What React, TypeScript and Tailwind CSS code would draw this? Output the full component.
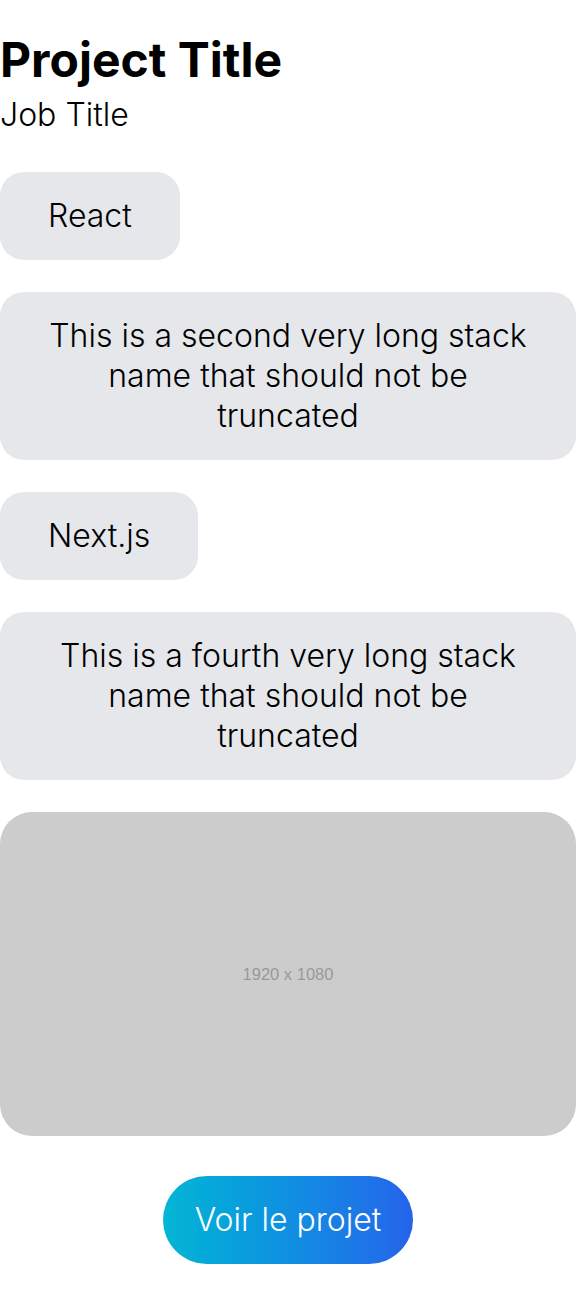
const stacks = [
  "React",
  "This is a second very long stack name that should not be truncated",
  "Next.js",
  "This is a fourth very long stack name that should not be truncated",
];

const App = () => {
  return (
    <main className="bg-white text-black pt-9 pb-8 font-['Inter',sans-serif]">
      <h1 className="text-5xl font-bold leading-none">Project Title</h1>
      <p className="text-[32px] font-light leading-10 mt-[11px]">Job Title</p>

      <div className="flex flex-col items-start gap-8 mt-[37px]">
        {stacks.map((name) => (
          <span
            key={name}
            className="bg-gray-200 rounded-3xl px-12 py-6 text-[32px] font-light leading-10 text-center"
          >
            {name}
          </span>
        ))}

        <div className="w-full aspect-video bg-[#cccccc] rounded-[32px] flex items-center justify-center">
          <span className="text-[#999999] text-[16.5px] font-['Liberation_Sans',sans-serif]">
            1920 x 1080
          </span>
        </div>
      </div>

      <div className="flex justify-center mt-10">
        <a
          href="#"
          className="rounded-full px-8 py-6 text-[32px] font-light leading-10 text-white bg-gradient-to-r from-[#06b6d4] to-[#2563eb]"
        >
          Voir le projet
        </a>
      </div>
    </main>
  );
};

export default App;
